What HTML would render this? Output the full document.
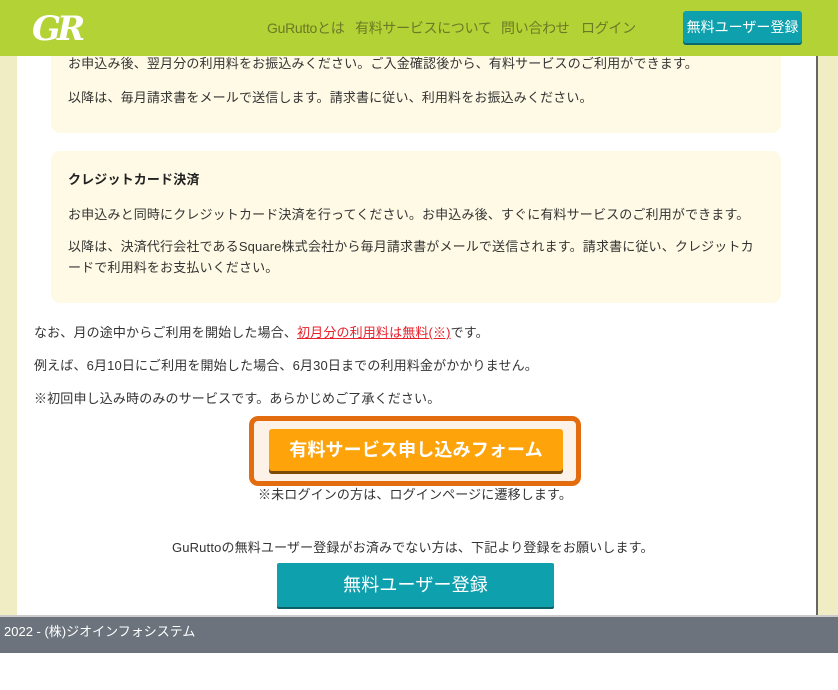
<!DOCTYPE html>
<html><head><meta charset="utf-8"><style>
*{margin:0;padding:0;box-sizing:border-box}
body{width:838px;height:690px;position:relative;overflow:hidden;background:#fff;font-family:"Liberation Sans","Noto Sans CJK JP",sans-serif;color:#333;font-size:13px;letter-spacing:0.15px}
.lb{position:absolute;left:0;top:0;width:17px;height:615px;background:#f0edc5}
.rb{position:absolute;left:816px;top:0;width:22px;height:615px;background:#f0edc5;border-left:2px solid #666}
.hdr{position:absolute;left:0;top:0;width:838px;height:56px;background:#b3d236}
.logo{position:absolute;left:32px;top:9px;font:italic bold 34px "DejaVu Serif",serif;color:#fff;letter-spacing:-4px}
.nav{position:absolute;top:18px;font-size:14px;color:#6b7a26;letter-spacing:-0.3px}
.hbtn{position:absolute;left:683px;top:11px;width:119px;height:32px;background:#0ea0ac;border-radius:3px;color:#fff;font-size:14px;text-align:center;line-height:32px;box-shadow:0 2px 0 #0b6870;letter-spacing:0}
.box{position:absolute;left:51px;width:730px;background:#fffae5;border-radius:9px}
.t{position:absolute;white-space:nowrap}
.fb{position:absolute;left:249px;top:416px;width:332px;height:70px;border:5px solid #e26c0e;border-radius:9px;background:#fdf2e8}
.ob{position:absolute;left:269px;top:429px;width:294px;height:42px;background:#fea40a;border-radius:3px;box-shadow:0 3px 0 #7a4a08;color:#fff;font-weight:bold;font-size:18px;text-align:center;line-height:42px}
.tb{position:absolute;left:277px;top:563px;width:277px;height:44px;background:#0fa0ad;border-radius:2px;box-shadow:0 2px 0 #0b5f66;color:#fff;font-size:18px;text-align:center;line-height:44px}
.ft{position:absolute;left:0;top:615px;width:838px;height:38px;background:#6c737c;border-top:2px solid #ccc;color:#fff;font-size:13px;line-height:30px;padding-left:4px;letter-spacing:0}
</style></head><body>
<div class="lb"></div><div class="rb"></div>
<div class="box" style="top:30px;height:103px"></div>
<div class="box" style="top:151px;height:152px"></div>
<div class="t" style="left:68px;top:53px">お申込み後、翌月分の利用料をお振込みください。ご入金確認後から、有料サービスのご利用ができます。</div>
<div class="t" style="left:68px;top:87px">以降は、毎月請求書をメールで送信します。請求書に従い、利用料をお振込みください。</div>
<div class="t" style="left:68px;top:169px;font-weight:bold;color:#222">クレジットカード決済</div>
<div class="t" style="left:68px;top:204px">お申込みと同時にクレジットカード決済を行ってください。お申込み後、すぐに有料サービスのご利用ができます。</div>
<div class="t" style="left:68px;top:236px">以降は、決済代行会社であるSquare株式会社から毎月請求書がメールで送信されます。請求書に従い、クレジットカ</div>
<div class="t" style="left:68px;top:257px">ードで利用料をお支払いください。</div>
<div class="t" style="left:34px;top:322px">なお、月の途中からご利用を開始した場合、<span style="color:#e8202a;text-decoration:underline">初月分の利用料は無料(※)</span>です。</div>
<div class="t" style="left:34px;top:355px">例えば、6月10日にご利用を開始した場合、6月30日までの利用料金がかかりません。</div>
<div class="t" style="left:34px;top:388px">※初回申し込み時のみのサービスです。あらかじめご了承ください。</div>
<div class="fb"></div>
<div class="ob">有料サービス申し込みフォーム</div>
<div class="t" style="left:258px;top:484px">※未ログインの方は、ログインページに遷移します。</div>
<div class="t" style="left:172px;top:537px">GuRuttoの無料ユーザー登録がお済みでない方は、下記より登録をお願いします。</div>
<div class="tb">無料ユーザー登録</div>
<div class="ft">2022 - (株)ジオインフォシステム</div>
<div class="hdr">
<div class="logo">GR</div>
<div class="nav" style="left:267px">GuRuttoとは</div>
<div class="nav" style="left:355px">有料サービスについて</div>
<div class="nav" style="left:501px">問い合わせ</div>
<div class="nav" style="left:581px">ログイン</div>
<div class="hbtn">無料ユーザー登録</div>
</div>
</body></html>
